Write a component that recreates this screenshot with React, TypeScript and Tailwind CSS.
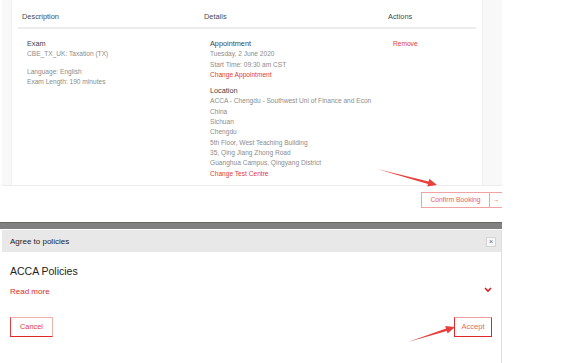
import React from 'react';

const titleCls = "text-[7.3px] leading-[10.3px] text-[#3f3f3f]";
const bodyCls = "text-[6.6px] leading-[10.3px] text-[#8c8c8c]";
const linkCls = "text-[6.6px] leading-[10.3px] text-[#e23b3b]";

const locationLines = [
  'ACCA - Chengdu - Southwest Uni of Finance and Econ',
  'China',
  'Sichuan',
  'Chengdu',
  '5th Floor, West Teaching Building',
  '35, Qing Jiang Zhong Road',
  'Guanghua Campus, Qingyang District',
];

const BookingSummary = () => (
  <div className="ml-[2px] flex h-[186px] w-[500px] border-b border-[#ececec] bg-[#f8f8f8]">
    <div className="w-[10px] border-r border-[#efefef]" />
    <div className="w-[470px] bg-white px-[6px]">
      <div className="grid h-[29px] grid-cols-[182px_184px_1fr] border-b-2 border-[#ececec] pt-[12px] text-[7.4px] leading-[10px] text-[#4a4a4a]">
        <div className="pl-[4px]">Description</div>
        <div className="pl-[4px]">Details</div>
        <div className="pl-[4px]">Actions</div>
      </div>
      <div className="grid grid-cols-[182px_184px_1fr] pt-[10px]">
        <div className="pl-[9px]">
          <div className={titleCls}>Exam</div>
          <div className={bodyCls}>CBE_TX_UK: Taxation (TX)</div>
          <div className={`${bodyCls} mt-[7px]`}>Language: English</div>
          <div className={bodyCls}>Exam Length: 190 minutes</div>
        </div>
        <div className="pl-[10px]">
          <div className={titleCls}>Appointment</div>
          <div className={bodyCls}>Tuesday, 2 June 2020</div>
          <div className={bodyCls}>Start Time: 09:30 am CST</div>
          <div className={linkCls}>Change Appointment</div>
          <div className={`${titleCls} mt-[6px]`}>Location</div>
          {locationLines.map((l) => (
            <div key={l} className={bodyCls}>{l}</div>
          ))}
          <div className={linkCls}>Change Test Centre</div>
        </div>
        <div className="pl-[9px]">
          <div className={linkCls}>Remove</div>
        </div>
      </div>
    </div>
    <div className="w-[20px] border-l border-[#eeeeee]" />
  </div>
);

const PoliciesDialog = () => (
  <div className="ml-[2px] h-[134px] w-[500px] border-r border-[#dddddd] bg-white">
    <div className="flex h-[22px] items-center justify-between bg-[#e8e8e8] pl-[8px] pr-[5px] pt-[1px]">
      <span className="text-[8px] text-[#222]">Agree to policies</span>
      <span className="flex h-[10px] w-[10px] items-center justify-center border border-[#d4d4d4] bg-[#f6f6f6] text-[7px] leading-none text-[#666]">
        ×
      </span>
    </div>
    <div className="pl-[8px] pr-[9px] pt-[12px]">
      <div className="text-[10.5px] leading-[14px] text-[#222]">ACCA Policies</div>
      <div className="mt-[9px] flex items-start justify-between">
        <span className="text-[8px] leading-[10px] text-[#e02b2b]">Read more</span>
        <svg width="8" height="6" viewBox="0 0 8 6">
          <path d="M1 1 L4 4 L7 1" fill="none" stroke="#d82020" strokeWidth="1.6" />
        </svg>
      </div>
      <div className="mt-[20px] flex items-start justify-between">
        <button className="flex h-[20px] w-[43px] items-center justify-center border border-[#f0b0b0] border-b-[#e02828] border-l-[#e04040] text-[7.4px] text-[#e03a3a]">
          Cancel
        </button>
        <button className="flex h-[20px] w-[38px] items-center justify-center border border-[#e02828] border-t-[#ef9f9f] text-[7.6px] text-[#e06a6a]">
          Accept
        </button>
      </div>
    </div>
  </div>
);

export default function App() {
  return (
    <div className="relative h-[363px] w-[581px] overflow-hidden bg-white font-['Liberation_Sans',Arial,sans-serif]">
      <BookingSummary />

      <div className="ml-[2px] flex w-[500px] justify-end pt-[6px]">
        <div className="flex h-[16px] border-y border-l border-[#f0a3a3]">
          <span className="flex w-[67px] items-center justify-center text-[6.8px] text-[#e36262]">Confirm Booking</span>
          <span className="flex w-[13px] items-center justify-center border-l border-[#f0a3a3] text-[7px] text-[#e36262]">→</span>
        </div>
      </div>

      <div className="mt-[14px] h-[7px] w-[502px] border-t border-[#6b6662] bg-[#808080]" />
      <div className="h-[1px]" />

      <PoliciesDialog />

      {/* annotation arrows */}
      <svg className="pointer-events-none absolute left-0 top-0" width="581" height="363">
        <polygon points="377,169 428.6,181.4 429.3,178.8 437,185 427.3,186.6 428.0,184.0" fill="#e8403c" />
        <polygon points="408,342 446.0,328.5 445.2,325.9 455,327 447.6,333.5 446.8,330.9" fill="#e8403c" />
      </svg>
    </div>
  );
}
